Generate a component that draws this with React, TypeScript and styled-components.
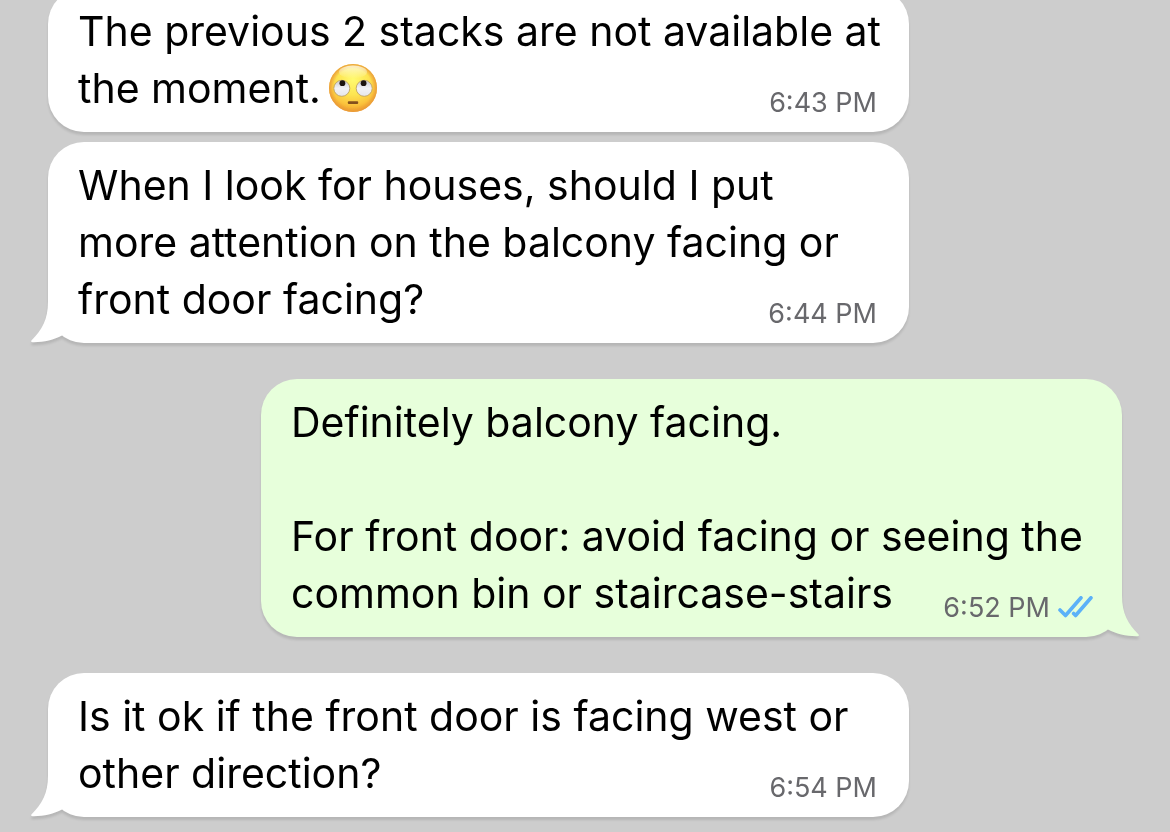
import React from "react";
import styled, { createGlobalStyle } from "styled-components";

const Global = createGlobalStyle`
  * { box-sizing: border-box; }
  body {
    margin: 0;
    background: #cdcdcd;
    overflow-x: hidden;
    font-family: Inter, "Liberation Sans", sans-serif;
  }
`;

const Chat = styled.main`
  display: flex;
  flex-direction: column;
  margin-top: -12px;
  padding: 0 48px 12px;
`;

const Bubble = styled.article<{ $sent?: boolean; $gap?: number }>`
  position: relative;
  width: 861px;
  max-width: 100%;
  align-self: ${(p) => (p.$sent ? "flex-end" : "flex-start")};
  margin-top: ${(p) => p.$gap || 0}px;
  padding: 15px 27px 15px 30px;
  border-radius: 36px;
  background: ${(p) => (p.$sent ? "#e7ffdb" : "#ffffff")};
  filter: drop-shadow(0 3px 1px rgba(0, 0, 0, 0.11));
`;

const Text = styled.div`
  color: #000000;
  font-size: 41px;
  line-height: 57px;
  white-space: pre-line;
`;

const Meta = styled.span<{ $sent?: boolean }>`
  float: right;
  display: flex;
  align-items: center;
  gap: 8px;
  margin: 27px ${(p) => (p.$sent ? 2 : 5)}px -2px 0;
  color: #68686c;
  font-size: 27px;
  line-height: 32px;
`;

const Tail = styled.svg<{ $sent?: boolean }>`
  position: absolute;
  bottom: 0;
  ${(p) => (p.$sent ? "right: -18px; transform: scaleX(-1);" : "left: -18px;")}
  fill: ${(p) => (p.$sent ? "#e7ffdb" : "#ffffff")};
`;

const Emoji = styled.svg`
  margin-left: 7px;
  vertical-align: -10px;
`;

function RollingEyes() {
  return (
    <Emoji width="50" height="50" viewBox="0 0 50 50" role="img" aria-label="Face with rolling eyes">
      <defs>
        <radialGradient id="face" cx="0.5" cy="0.32" r="0.7">
          <stop offset="0" stopColor="#fffa70" />
          <stop offset="0.45" stopColor="#fde552" />
          <stop offset="0.75" stopColor="#fbc53e" />
          <stop offset="1" stopColor="#f09a26" />
        </radialGradient>
        <radialGradient id="rim" cx="0.5" cy="0.5" r="0.5">
          <stop offset="0.8" stopColor="#eda136" stopOpacity="0" />
          <stop offset="1" stopColor="#e8983a" stopOpacity="0.9" />
        </radialGradient>
        <linearGradient id="shine" x1="0" y1="0" x2="0" y2="1">
          <stop offset="0" stopColor="#ffffff" stopOpacity="0.7" />
          <stop offset="1" stopColor="#ffffff" stopOpacity="0" />
        </linearGradient>
        <linearGradient id="eye" x1="0" y1="0" x2="0" y2="1">
          <stop offset="0" stopColor="#c9c9cf" />
          <stop offset="0.5" stopColor="#f2f2f6" />
          <stop offset="1" stopColor="#e6e6ea" />
        </linearGradient>
      </defs>
      <circle cx="25" cy="25" r="24" fill="url(#face)" />
      <circle cx="25" cy="25" r="24" fill="url(#rim)" />
      <ellipse cx="25" cy="9" rx="14" ry="6.5" fill="url(#shine)" />
      <circle cx="13.8" cy="25.3" r="8" fill="url(#eye)" stroke="#b99a5c" strokeWidth="0.8" />
      <circle cx="36.2" cy="25.3" r="8" fill="url(#eye)" stroke="#b99a5c" strokeWidth="0.8" />
      <circle cx="14.4" cy="20.2" r="2.9" fill="#1c1410" />
      <circle cx="35.6" cy="20.2" r="2.9" fill="#1c1410" />
      <rect x="19.8" y="38.2" width="10.4" height="2.8" rx="1" fill="#84501c" />
    </Emoji>
  );
}

function Ticks() {
  return (
    <svg width="35" height="24" viewBox="0 0 35 24" fill="none" stroke="#5cb1f8" strokeWidth="3.6" strokeLinecap="round" strokeLinejoin="round" role="img" aria-label="Read">
      <path d="M2 14 7.5 19.5 23 1.8" />
      <path d="M15.6 17.5 17.6 19.5 33 1.8" />
    </svg>
  );
}

interface MessageProps {
  time: string;
  sent?: boolean;
  tail?: boolean;
  gap?: number;
  children: React.ReactNode;
}

function Message({ time, sent, tail, gap, children }: MessageProps) {
  return (
    <Bubble $sent={sent} $gap={gap}>
      {tail && (
        <Tail $sent={sent} width="44" height="44" viewBox="0 0 44 44" aria-hidden="true">
          <path d="M18 3C18 20 12 31 1.4 41.5Q0.4 43.2 3 43.2C13 43.4 24 41 32 36.5L42 24V3Z" />
        </Tail>
      )}
      <Text>
        {children}
        <Meta $sent={sent}>
          <time>{time}</time>
          {sent && <Ticks />}
        </Meta>
      </Text>
    </Bubble>
  );
}

export default function App() {
  return (
    <>
      <Global />
      <Chat>
        <Message time="6:43 PM">
          The previous 2 stacks are not available at the moment.
          <RollingEyes />
        </Message>
        <Message time="6:44 PM" gap={10} tail>
          When I look for houses, should I put more attention on the balcony facing or front door facing?
        </Message>
        <Message time="6:52 PM" gap={36} sent tail>
          {"Definitely balcony facing.\n\nFor front door: avoid facing or seeing the common bin or staircase-stairs"}
        </Message>
        <Message time="6:54 PM" gap={36} tail>
          Is it ok if the front door is facing west or other direction?
        </Message>
      </Chat>
    </>
  );
}
